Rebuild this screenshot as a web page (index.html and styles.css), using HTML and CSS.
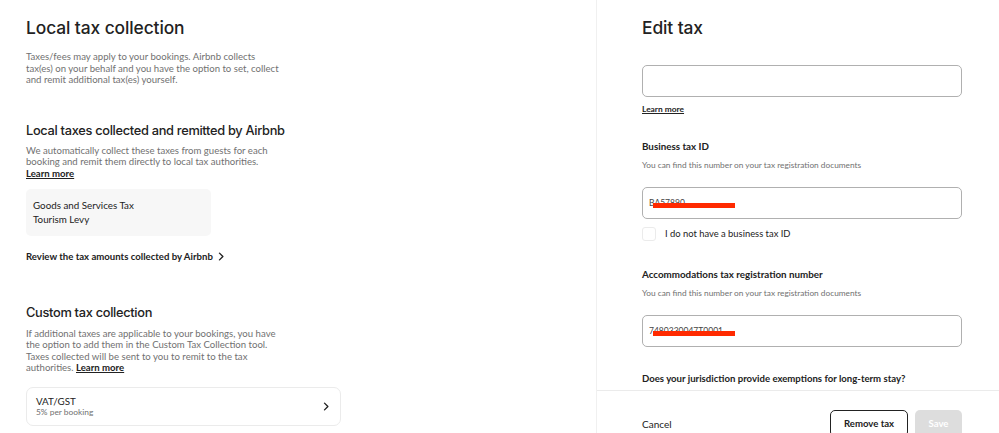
FILE: index.html
```html
<!DOCTYPE html>
<html lang="en">
<head>
<meta charset="utf-8">
<title>Local tax collection</title>
<link rel="stylesheet" href="styles.css">
</head>
<body>
<div class="page">
  <main class="left">
    <h1 class="title">Local tax collection</h1>
    <p class="desc">Taxes/fees may apply to your bookings. Airbnb collects tax(es) on your behalf and you have the option to set, collect and remit additional tax(es) yourself.</p>

    <h2 class="section-title first">Local taxes collected and remitted by Airbnb</h2>
    <p class="desc desc-sub">We automatically collect these taxes from guests for each booking and remit them directly to local tax authorities. <a class="link" href="#">Learn more</a></p>
    <div class="tax-box">
      <div>Goods and Services Tax</div>
      <div>Tourism Levy</div>
    </div>
    <a class="review" href="#">Review the tax amounts collected by Airbnb
      <svg class="chev" viewBox="0 0 8 12" width="6" height="9"><path d="M2 1.5 L6.5 6 L2 10.5" fill="none" stroke="#222" stroke-width="1.8" stroke-linecap="round" stroke-linejoin="round"/></svg>
    </a>

    <h2 class="section-title second">Custom tax collection</h2>
    <p class="desc desc-sub custom">If additional taxes are applicable to your bookings, you have the option to add them in the Custom Tax Collection tool. Taxes collected will be sent to you to remit to the tax authorities. <a class="link" href="#">Learn more</a></p>
    <div class="tax-card">
      <div class="tax-card-text">
        <div class="tax-name">VAT/GST</div>
        <div class="tax-rate">5% per booking</div>
      </div>
      <svg class="chev" viewBox="0 0 8 12" width="6" height="9"><path d="M2 1.5 L6.5 6 L2 10.5" fill="none" stroke="#222" stroke-width="1.8" stroke-linecap="round" stroke-linejoin="round"/></svg>
    </div>
  </main>

  <aside class="panel">
    <div class="panel-body">
      <h1 class="title">Edit tax</h1>
      <div class="field first-field"></div>
      <a class="link small-link" href="#">Learn more</a>

      <div class="label first-label">Business tax ID</div>
      <div class="hint">You can find this number on your tax registration documents</div>
      <div class="field filled"><span class="value">BA57890</span><span class="redact"></span></div>
      <label class="check-row"><span class="checkbox"></span><span>I do not have a business tax ID</span></label>

      <div class="label">Accommodations tax registration number</div>
      <div class="hint">You can find this number on your tax registration documents</div>
      <div class="field filled"><span class="value">7480330047T0001</span><span class="redact"></span></div>

      <div class="question">Does your jurisdiction provide exemptions for long-term stay?</div>
    </div>
    <footer class="panel-footer">
      <a class="cancel" href="#">Cancel</a>
      <div class="actions">
        <button class="btn btn-outline">Remove tax</button>
        <button class="btn btn-disabled">Save</button>
      </div>
    </footer>
  </aside>
</div>
</body>
</html>
```

FILE: styles.css
```css
* { box-sizing: border-box; }
html, body {
  margin: 0;
  padding: 0;
  height: 433px;
  overflow: hidden;
  background: #fff;
  font-family: Lato, "Noto Sans", "Liberation Sans", sans-serif;
  color: #222222;
}
.page {
  display: flex;
  height: 433px;
}
.left {
  width: 596px;
  flex: none;
  padding: 16px 0 0 26px;
}
.title {
  margin: 0;
  font-family: Inter, Lato, sans-serif;
  font-size: 17.4px;
  line-height: 24px;
  font-weight: 500;
  letter-spacing: -0.1px;
  color: #222;
}
.desc {
  margin: 11px 0 0;
  width: 256px;
  font-size: 9.6px;
  line-height: 11.6px;
  color: #717171;
}
.desc-sub { margin-top: 5px; width: 250px; }
.custom { width: 254px; margin-top: 6px; }
.section-title {
  margin: 0;
  font-family: Inter, Lato, sans-serif;
  font-size: 12.8px;
  line-height: 18px;
  font-weight: 500;
  letter-spacing: -0.3px;
}
.section-title.first { margin-top: 36px; }
.section-title.second { margin-top: 40px; }
.link {
  color: #222;
  text-decoration: underline;
  font-weight: 700;
}
.tax-box {
  margin-top: 9px;
  width: 185px;
  height: 47px;
  background: #f7f7f7;
  border-radius: 5px;
  padding: 9px 7px 0;
  font-size: 9.8px;
  line-height: 14px;
  color: #222;
}
.review {
  display: flex;
  align-items: center;
  gap: 5px;
  margin-top: 14px;
  font-size: 9.6px;
  line-height: 14px;
  font-weight: 700;
  color: #222;
  text-decoration: none;
}
.tax-card {
  margin-top: 13px;
  width: 315px;
  height: 39px;
  border: 1px solid #ebebeb;
  border-radius: 7px;
  display: flex;
  align-items: center;
  justify-content: space-between;
  padding: 0 11px 0 9px;
}
.tax-card .chev { margin-top: 1px; }
.tax-name {
  font-size: 9.8px;
  line-height: 12px;
  color: #222;
}
.tax-rate {
  font-size: 8.4px;
  line-height: 10px;
  color: #717171;
}

.panel {
  width: 403px;
  flex: none;
  border-left: 1px solid #f0f0f0;
  display: flex;
  flex-direction: column;
  height: 433px;
  overflow: hidden;
}
.panel-body {
  flex: none;
  height: 390px;
  overflow: hidden;
  padding: 16px 37px 0 45px;
}
.field {
  height: 32px;
  border: 1px solid #b0b0b0;
  border-radius: 5px;
}
.first-field { margin-top: 25px; }
.small-link {
  display: block;
  margin-top: 7px;
  font-size: 8.4px;
  line-height: 10px;
}
.label {
  margin-top: 26px;
  font-size: 9.8px;
  line-height: 14px;
  font-weight: 700;
}
.first-label { margin-top: 25px; }
.hint {
  margin-top: 7px;
  font-size: 8.3px;
  line-height: 10px;
  color: #717171;
}
.filled {
  margin-top: 17px;
  position: relative;
  display: flex;
  align-items: center;
  padding-left: 6px;
  font-size: 8.5px;
  color: #444;
}
.redact {
  position: absolute;
  left: 10px;
  top: 15px;
  width: 82px;
  height: 5px;
  background: #ff2a00;
}
.check-row {
  display: flex;
  align-items: center;
  gap: 9px;
  margin-top: 8px;
  font-size: 9.4px;
  line-height: 14px;
  color: #222;
}
.checkbox {
  width: 14px;
  height: 14px;
  border: 1px solid #ebebeb;
  border-radius: 3px;
}
.question {
  margin-top: 25px;
  font-size: 9.6px;
  line-height: 14px;
  font-weight: 700;
}
.panel-footer {
  flex: none;
  height: 60px;
  border-top: 1px solid #ebebeb;
  display: flex;
  align-items: flex-start;
  justify-content: space-between;
  padding: 19px 37px 0 45px;
}
.cancel {
  margin-top: 7px;
  font-size: 10px;
  line-height: 14px;
  color: #222;
  text-decoration: none;
}
.actions {
  display: flex;
  gap: 7px;
}
.btn {
  height: 27px;
  border-radius: 5px;
  font-family: inherit;
  font-size: 9.6px;
  font-weight: 700;
  padding: 0;
}
.btn-outline {
  width: 78px;
  background: #fff;
  border: 1px solid #222;
  color: #222;
}
.btn-disabled {
  width: 47px;
  background: #dddddd;
  border: none;
  color: #fff;
}
```
